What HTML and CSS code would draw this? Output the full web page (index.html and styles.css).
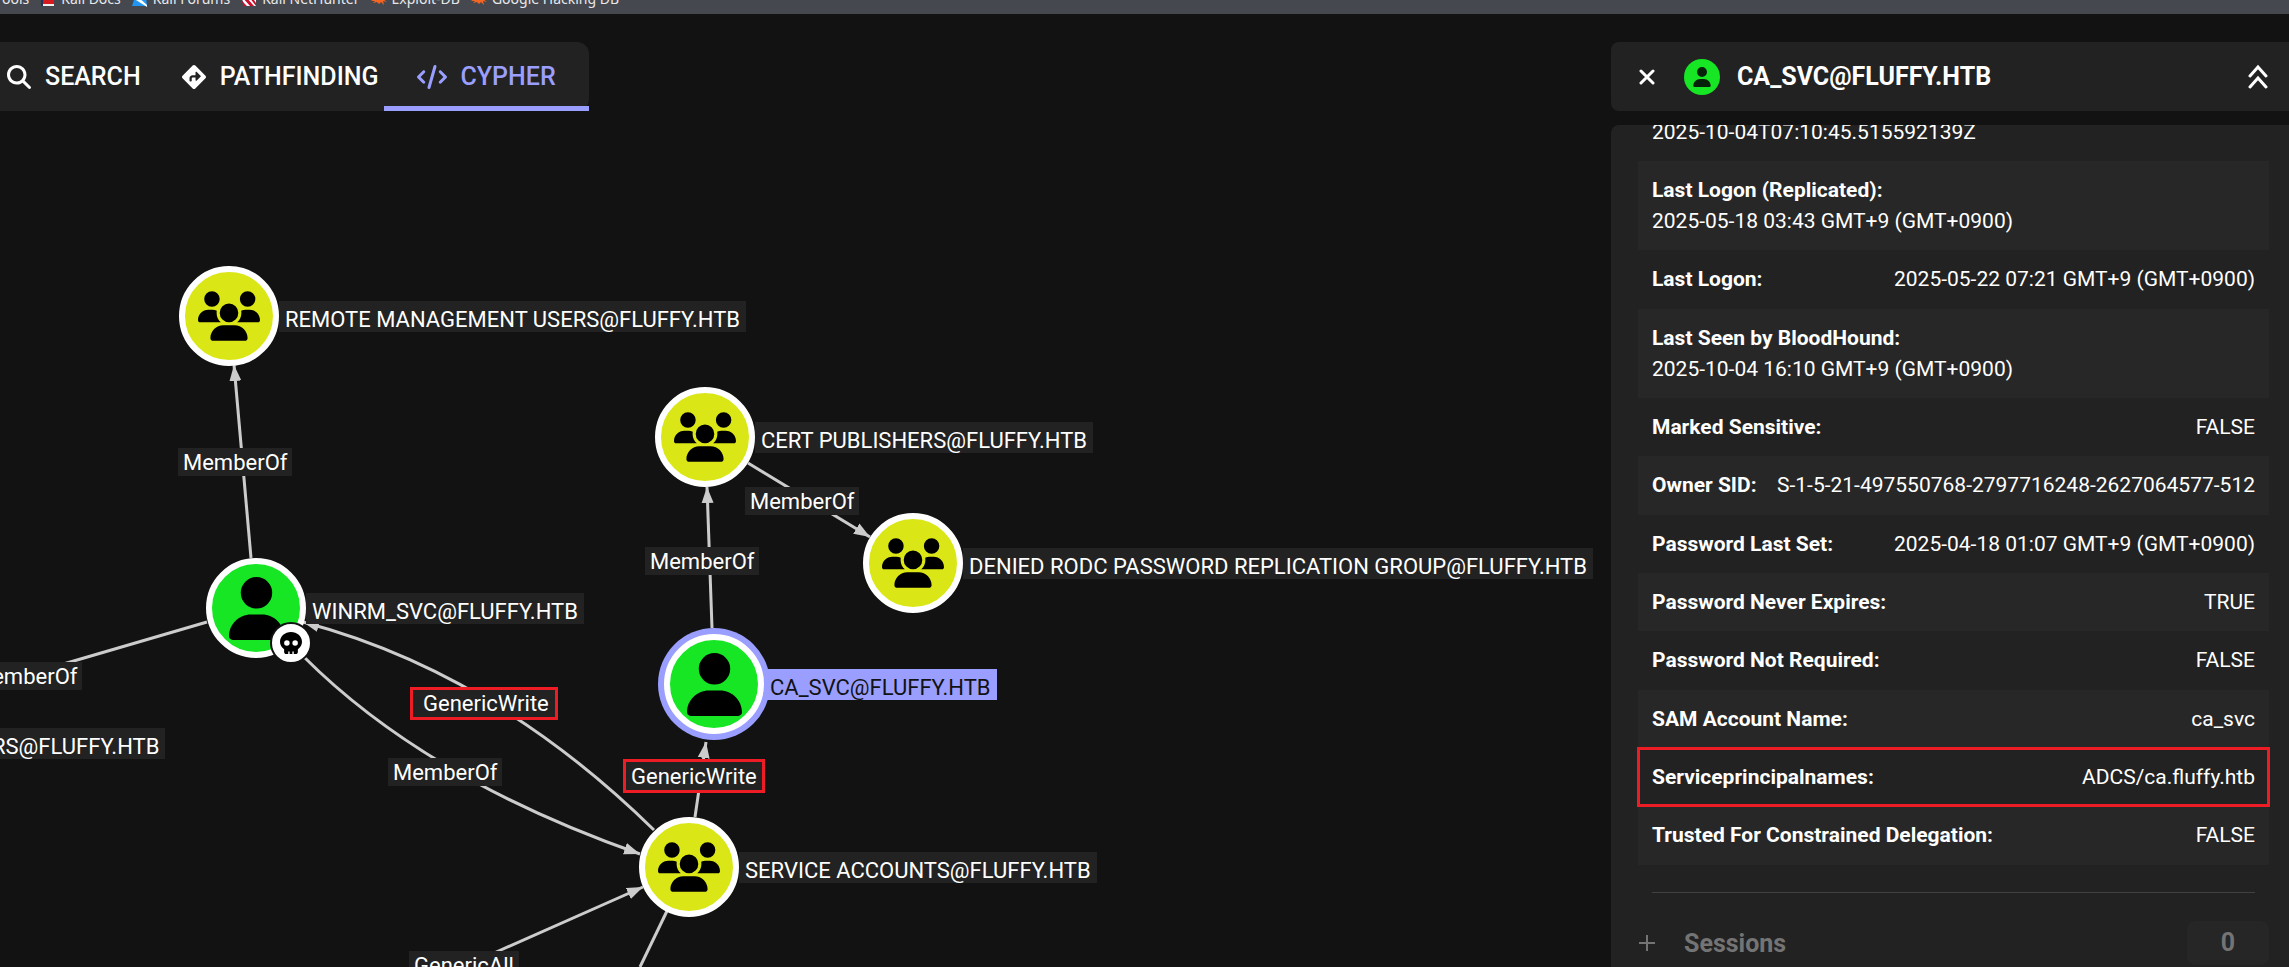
FILE: index.html
```html
<!DOCTYPE html>
<html lang="en">
<head>
    <meta charset="UTF-8">
    <meta name="viewport" content="width=device-width, initial-scale=1.0">
    <title>BloodHound - Explore</title>
    <link rel="stylesheet" href="styles.css">
</head>
<body>
    <!-- Shared icons -->
    <svg class="sprite" aria-hidden="true">
        <symbol id="icon-users" viewBox="0 0 640 512"><path d="M144 0a80 80 0 1 1 0 160A80 80 0 1 1 144 0zM512 0a80 80 0 1 1 0 160A80 80 0 1 1 512 0zM0 298.7C0 239.8 47.8 192 106.7 192l42.7 0c15.9 0 31 3.5 44.6 9.7c-1.3 7.2-1.9 14.7-1.9 22.3c0 38.2 16.8 72.5 43.3 96c-.2 0-.4 0-.7 0L21.3 320C9.6 320 0 310.4 0 298.7zM405.3 320c-.2 0-.4 0-.7 0c26.6-23.5 43.3-57.8 43.3-96c0-7.6-.7-15-1.9-22.3c13.6-6.3 28.7-9.7 44.6-9.7l42.7 0C592.2 192 640 239.8 640 298.7c0 11.8-9.6 21.3-21.3 21.3l-213.3 0zM224 224a96 96 0 1 1 192 0 96 96 0 1 1 -192 0zM128 485.3C128 411.7 187.7 352 261.3 352l117.3 0C452.3 352 512 411.7 512 485.3c0 14.7-11.9 26.7-26.7 26.7l-330.7 0c-14.7 0-26.7-11.9-26.7-26.7z"/></symbol>
        <symbol id="icon-user" viewBox="0 0 448 512"><path d="M224 256A128 128 0 1 0 224 0a128 128 0 1 0 0 256zm-45.7 48C79.8 304 0 383.8 0 482.3C0 498.7 13.3 512 29.7 512l388.6 0c16.4 0 29.7-13.3 29.7-29.7C448 383.8 368.2 304 269.7 304l-91.4 0z"/></symbol>
        <symbol id="icon-skull" viewBox="0 0 512 512"><path d="M416 398.9c58.5-41.1 96-104.1 96-174.9C512 100.3 397.4 0 256 0S0 100.3 0 224c0 70.7 37.5 133.8 96 174.9c0 .4 0 .7 0 1.1l0 64c0 26.5 21.5 48 48 48l48 0 0-48c0-8.8 7.2-16 16-16s16 7.2 16 16l0 48 64 0 0-48c0-8.8 7.2-16 16-16s16 7.2 16 16l0 48 48 0c26.5 0 48-21.5 48-48l0-64c0-.4 0-.7 0-1.1zM96 256a64 64 0 1 1 128 0A64 64 0 1 1 96 256zm256-64a64 64 0 1 1 0 128 64 64 0 1 1 0-128z"/></symbol>
        <symbol id="icon-spider" viewBox="0 0 16 16"><path d="M1 6l4 1-1-3 3 2 3-3 0 3 5-1-3 3 4 3-4-1 1 4-3-3-2 2-2-2-4 1 2-2-4 0 3-2z"/></symbol>
    </svg>

    <!-- Graph canvas -->
    <div class="graph">
        <svg class="edges" aria-hidden="true">
            <defs>
                <marker id="arrow" markerUnits="userSpaceOnUse" markerWidth="17" markerHeight="14" refX="16" refY="7" orient="auto">
                    <path d="M0 1L16 7L0 13z"/>
                </marker>
            </defs>
            <path class="arrow" d="M251 558L234 365"/>
            <path class="arrow" d="M712 628L707 487"/>
            <path class="arrow" d="M748 463L870 537"/>
            <path class="arrow" d="M695 817L706 742"/>
            <path class="arrow" d="M654 830Q493 672 303 622"/>
            <path class="arrow" d="M304 657Q426 779 640 854"/>
            <path class="arrow" d="M494 953L643 887"/>
            <path d="M207 622L60 665"/>
            <path d="M667 911L640 967"/>
        </svg>

        <span class="edge-label remote-member">MemberOf</span>
        <span class="edge-label left-member">MemberOf</span>
        <span class="edge-label cert-member">MemberOf</span>
        <span class="edge-label denied-member">MemberOf</span>
        <span class="edge-label service-member">MemberOf</span>
        <span class="edge-label generic-all">GenericAll</span>
        <span class="edge-label marked winrm-write">GenericWrite</span>
        <span class="edge-label marked ca-write">GenericWrite</span>

        <div class="node remote">
            <span class="circle group"><svg><use href="#icon-users"/></svg></span>
            <span class="node-label">REMOTE MANAGEMENT USERS@FLUFFY.HTB</span>
        </div>
        <div class="node cert">
            <span class="circle group"><svg><use href="#icon-users"/></svg></span>
            <span class="node-label">CERT PUBLISHERS@FLUFFY.HTB</span>
        </div>
        <div class="node denied">
            <span class="circle group"><svg><use href="#icon-users"/></svg></span>
            <span class="node-label">DENIED RODC PASSWORD REPLICATION GROUP@FLUFFY.HTB</span>
        </div>
        <div class="node winrm">
            <span class="circle user"><svg><use href="#icon-user"/></svg></span>
            <span class="node-label">WINRM_SVC@FLUFFY.HTB</span>
            <span class="owned"><svg><use href="#icon-skull"/></svg></span>
        </div>
        <div class="node ca selected">
            <span class="circle user"><svg><use href="#icon-user"/></svg></span>
            <span class="node-label">CA_SVC@FLUFFY.HTB</span>
        </div>
        <div class="node service">
            <span class="circle group"><svg><use href="#icon-users"/></svg></span>
            <span class="node-label">SERVICE ACCOUNTS@FLUFFY.HTB</span>
        </div>
        <span class="node-label cut-label">RS@FLUFFY.HTB</span>
    </div>

    <!-- Bookmarks toolbar -->
    <nav class="bookmarks">
        <div class="bookmark-list">
            <a href="#">ools</a>
            <a href="#"><svg viewBox="0 0 16 16"><path fill="#1d3557" d="M1 0h3v15H1z"/><path fill="#d71920" d="M3 0h11v13H3z"/><path fill="#eeeeee" d="M3 13h11v2H3z"/></svg>Kali Docs</a>
            <a href="#"><svg viewBox="0 0 16 16"><path fill="#2196f3" d="M0 15L2 9 5 5h9l1 10z"/><path fill="#ffffff" d="M5 5l10 9v2L4 9z"/></svg>Kali Forums</a>
            <a href="#"><svg viewBox="0 0 16 16"><path fill="#ffffff" d="M0 6h15v9H4z"/><path fill="#c8102e" d="M1 6h4l8 9H9zM8 6h3l4 6v3zM0 9l6 6H3z"/></svg>Kali NetHunter</a>
            <a href="#"><svg viewBox="0 0 16 16" fill="#f26522"><use href="#icon-spider"/></svg>Exploit-DB</a>
            <a href="#"><svg viewBox="0 0 16 16" fill="#f26522"><use href="#icon-spider"/></svg>Google Hacking DB</a>
        </div>
    </nav>

    <main class="explore">
        <div class="tabs" role="tablist">
            <button class="tab" role="tab">
                <svg width="24" height="24" viewBox="0 0 512 512"><path d="M416 208c0 45.9-14.9 88.3-40 122.7L502.6 457.4c12.5 12.5 12.5 32.8 0 45.3s-32.8 12.5-45.3 0L330.7 376c-34.4 25.2-76.8 40-122.7 40C93.1 416 0 322.9 0 208S93.1 0 208 0S416 93.1 416 208zM208 352a144 144 0 1 0 0-288 144 144 0 1 0 0 288z"/></svg>
                SEARCH
            </button>
            <button class="tab" role="tab">
                <svg width="24" height="24" viewBox="0 0 512 512"><path d="M227.7 11.7c15.6-15.6 40.9-15.6 56.6 0l216 216c15.6 15.6 15.6 40.9 0 56.6l-216 216c-15.6 15.6-40.9 15.6-56.6 0l-216-216c-15.6-15.6-15.6-40.9 0-56.6l216-216zm87.6 137c-4.6-4.6-11.5-5.9-17.4-3.5s-9.9 8.3-9.9 14.8l0 56-64 0c-35.3 0-64 28.7-64 64l0 48c0 13.3 10.7 24 24 24s24-10.7 24-24l0-48c0-8.8 7.2-16 16-16l64 0 0 56c0 6.5 3.9 12.3 9.9 14.8s12.9 1.1 17.4-3.5l80-80c6.2-6.2 6.2-16.4 0-22.6l-80-80z"/></svg>
                PATHFINDING
            </button>
            <button class="tab active" role="tab" aria-selected="true">
                <svg width="30" height="24" viewBox="0 0 640 512"><path d="M392.8 1.2c-17-4.9-34.7 5-39.6 22l-128 448c-4.9 17 5 34.7 22 39.6s34.7-5 39.6-22l128-448c4.9-17-5-34.7-22-39.6zm80.6 120.1c-12.5 12.5-12.5 32.8 0 45.3L562.7 256l-89.4 89.4c-12.5 12.5-12.5 32.8 0 45.3s32.8 12.5 45.3 0l112-112c12.5-12.5 12.5-32.8 0-45.3l-112-112c-12.5-12.5-32.8-12.5-45.3 0zm-306.7 0c-12.5-12.5-32.8-12.5-45.3 0l-112 112c-12.5 12.5-12.5 32.8 0 45.3l112 112c12.5 12.5 32.8 12.5 45.3 0s12.5-32.8 0-45.3L77.3 256l89.4-89.4c12.5-12.5 12.5-32.8 0-45.3z"/></svg>
                CYPHER
            </button>
        </div>

        <aside class="info">
            <header class="info-header">
                <button class="icon-btn" aria-label="Close">
                    <svg width="16" height="16" viewBox="0 0 16 16"><path d="M2 2L14 14M14 2L2 14"/></svg>
                </button>
                <span class="type-icon"><svg width="18" height="20"><use href="#icon-user"/></svg></span>
                <h1>CA_SVC@FLUFFY.HTB</h1>
                <button class="icon-btn" aria-label="Collapse all">
                    <svg width="20" height="26" viewBox="0 0 20 26"><path d="M2 12L10 3L18 12M2 23L10 14L18 23"/></svg>
                </button>
            </header>

            <section class="info-body">
                <dl class="props">
                    <div class="prop stacked"><dd>2025-10-04T07:10:45.515592139Z</dd></div>
                    <div class="prop stacked"><dt>Last Logon (Replicated):</dt><dd>2025-05-18 03:43 GMT+9 (GMT+0900)</dd></div>
                    <div class="prop"><dt>Last Logon:</dt><dd>2025-05-22 07:21 GMT+9 (GMT+0900)</dd></div>
                    <div class="prop stacked"><dt>Last Seen by BloodHound:</dt><dd>2025-10-04 16:10 GMT+9 (GMT+0900)</dd></div>
                    <div class="prop"><dt>Marked Sensitive:</dt><dd>FALSE</dd></div>
                    <div class="prop"><dt>Owner SID:</dt><dd>S-1-5-21-497550768-2797716248-2627064577-512</dd></div>
                    <div class="prop"><dt>Password Last Set:</dt><dd>2025-04-18 01:07 GMT+9 (GMT+0900)</dd></div>
                    <div class="prop"><dt>Password Never Expires:</dt><dd>TRUE</dd></div>
                    <div class="prop"><dt>Password Not Required:</dt><dd>FALSE</dd></div>
                    <div class="prop"><dt>SAM Account Name:</dt><dd>ca_svc</dd></div>
                    <div class="prop marked-row"><dt>Serviceprincipalnames:</dt><dd>ADCS/ca.fluffy.htb</dd></div>
                    <div class="prop"><dt>Trusted For Constrained Delegation:</dt><dd>FALSE</dd></div>
                </dl>
                <hr>
                <button class="sessions" disabled>
                    <svg width="16" height="16" viewBox="0 0 16 16"><path d="M8 0V16M0 8H16"/></svg>
                    <span class="sessions-name">Sessions</span>
                    <span class="count">0</span>
                </button>
            </section>
        </aside>
    </main>
</body>
</html>
```

FILE: styles.css
```css
* {
    box-sizing: border-box;
}
body {
    position: relative;
    display: flex;
    flex-direction: column;
    height: 100vh;
    margin: 0;
    overflow: hidden;
    background: #121212;
    color: #ffffff;
    font-family: Roboto, sans-serif;
    font-size: 21px;
}
button {
    padding: 0;
    border: none;
    background: none;
    color: inherit;
    font-family: inherit;
    cursor: pointer;
}
.sprite {
    position: absolute;
    width: 0;
    height: 0;
}

/* Bookmarks */
.bookmarks {
    position: relative;
    flex: none;
    height: 14px;
    overflow: hidden;
    background: #46484f;
}
.bookmark-list {
    display: flex;
    gap: 11px;
    margin-top: -11px;
    padding-left: 2px;
}
.bookmark-list a {
    display: flex;
    align-items: center;
    gap: 5px;
    color: #e8e8ea;
    font-family: "Noto Sans", sans-serif;
    font-size: 14px;
    line-height: 20px;
    text-decoration: none;
    white-space: nowrap;
}
.bookmark-list svg {
    width: 16px;
    height: 16px;
}

/* Layout */
.explore {
    display: flex;
    flex: 1;
    justify-content: space-between;
    align-items: flex-start;
    min-height: 0;
    padding-top: 28px;
}

/* Tabs */
.tabs {
    position: relative;
    display: flex;
    height: 69px;
    padding-left: 7px;
    background: #222222;
    border-radius: 0 12px 12px 0;
}
.tab {
    display: flex;
    align-items: center;
    gap: 14px;
    margin-right: 41px;
    font-size: 25px;
    font-weight: 500;
}
.tab svg {
    fill: currentColor;
}
.tab:nth-child(2) {
    margin-right: 5px;
}
.tab.active {
    margin-right: 0;
    padding: 5px 33px 0;
    border-bottom: 5px solid #9a9fff;
    color: #9a9fff;
}

/* Info panel */
.info {
    position: relative;
    display: flex;
    flex-direction: column;
    gap: 14px;
    width: 678px;
    height: 100%;
}
.info-header {
    display: flex;
    flex: none;
    align-items: center;
    height: 69px;
    padding: 0 21px 0 28px;
    background: #222222;
    border-radius: 8px 0 0 8px;
}
.icon-btn svg {
    display: block;
    fill: none;
    stroke: #ffffff;
    stroke-width: 3;
    stroke-linecap: round;
}
.type-icon {
    display: flex;
    align-items: center;
    justify-content: center;
    width: 36px;
    height: 36px;
    margin: 0 17px 0 29px;
    background: #17e625;
    border-radius: 50%;
    fill: #06230a;
}
.info-header h1 {
    flex: 1;
    margin: 0;
    font-size: 25px;
    font-weight: 700;
}
.info-body {
    flex: 1;
    min-height: 0;
    padding: 0 20px 0 27px;
    overflow: hidden;
    background: #222222;
    border-radius: 8px 0 0 0;
}
.props {
    margin: -22px 0 0;
}
.prop {
    display: flex;
    justify-content: space-between;
    padding: 14px 14px 13px;
    line-height: 31px;
}
.prop:nth-child(even) {
    background: #272727;
}
.prop:nth-child(3n) {
    padding-bottom: 14px;
}
.prop.stacked {
    flex-direction: column;
}
.prop dt {
    font-weight: 700;
}
.prop dd {
    margin: 0;
}
.prop.marked-row {
    outline: 3px solid #ee1c25;
    outline-offset: -2px;
}
.info-body hr {
    height: 1px;
    margin: 27px 14px 28px;
    border: none;
    background: #414141;
}
.sessions {
    display: flex;
    align-items: center;
    width: 100%;
    padding-left: 1px;
    color: #747474;
    font-size: 25px;
    font-weight: 700;
}
.sessions svg {
    stroke: currentColor;
    stroke-width: 2;
}
.sessions-name {
    flex: 1;
    padding-left: 29px;
    text-align: left;
}
.count {
    width: 82px;
    background: #262626;
    border-radius: 8px;
    line-height: 44px;
}

/* Graph */
.graph {
    position: absolute;
    inset: 0;
    overflow: hidden;
    font-size: 22px;
    white-space: nowrap;
}
.edges {
    position: absolute;
    width: 100%;
    height: 100%;
    fill: none;
    stroke: #cccccc;
    stroke-width: 3;
}
.edges .arrow {
    marker-end: url(#arrow);
}
.edges marker path {
    fill: #cccccc;
    stroke: none;
}
.node {
    position: absolute;
    display: flex;
    align-items: center;
}
.circle {
    display: flex;
    align-items: center;
    justify-content: center;
    width: 100px;
    height: 100px;
    border: 6px solid #ffffff;
    border-radius: 50%;
}
.circle.group {
    background: #dbe617;
}
.circle.user {
    background: #17e625;
}
.group svg {
    width: 62px;
    height: 50px;
}
.user svg {
    width: 55px;
    height: 63px;
}
.node-label {
    padding: 6px 6px 0;
    background: #222222;
    line-height: 25px;
}
.selected .circle {
    box-shadow: 0 0 0 6px #9a9fff;
}
.selected .node-label {
    background: #9a9fff;
    color: #121212;
}
.owned {
    position: absolute;
    top: 64px;
    left: 64px;
    display: flex;
    align-items: center;
    justify-content: center;
    width: 42px;
    height: 42px;
    background: #ffffff;
    border: 2px solid #121212;
    border-radius: 50%;
}
.owned svg {
    width: 22px;
    height: 22px;
}
.edge-label {
    position: absolute;
    padding: 1px 5px 0;
    background: #222222;
    line-height: 27px;
}
.edge-label.marked {
    outline: 3px solid #ee1c25;
}

/* Node positions */
.remote { left: 179px; top: 266px; }
.cert { left: 655px; top: 387px; }
.denied { left: 863px; top: 513px; }
.winrm { left: 206px; top: 558px; }
.ca { left: 664px; top: 634px; }
.service { left: 639px; top: 817px; }
.cut-label { position: absolute; left: -14px; top: 728px; }

/* Edge label positions */
.remote-member { left: 178px; top: 448px; }
.left-member { left: -32px; top: 662px; }
.denied-member { left: 745px; top: 487px; }
.cert-member { left: 645px; top: 547px; }
.service-member { left: 388px; top: 758px; }
.generic-all { left: 409px; top: 951px; }
.winrm-write { left: 413px; top: 690px; padding: 0 6px 0 10px; }
.ca-write { left: 626px; top: 762px; }
```
